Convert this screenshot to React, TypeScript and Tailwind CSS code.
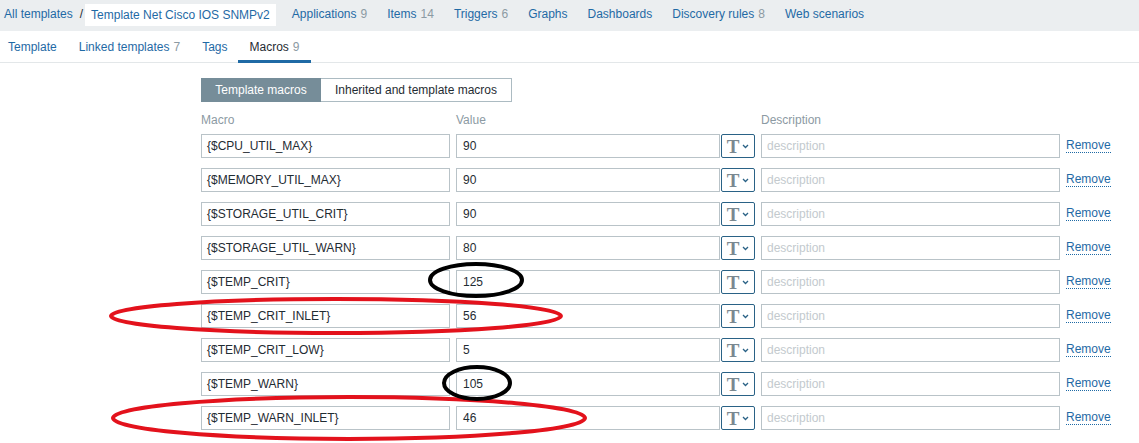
import React from "react";

const rows: [string, string][] = [
  ["{$CPU_UTIL_MAX}", "90"],
  ["{$MEMORY_UTIL_MAX}", "90"],
  ["{$STORAGE_UTIL_CRIT}", "90"],
  ["{$STORAGE_UTIL_WARN}", "80"],
  ["{$TEMP_CRIT}", "125"],
  ["{$TEMP_CRIT_INLET}", "56"],
  ["{$TEMP_CRIT_LOW}", "5"],
  ["{$TEMP_WARN}", "105"],
  ["{$TEMP_WARN_INLET}", "46"],
];

function Nav({ label, count }: { label: string; count?: string }) {
  return (
    <span className="px-[10px] whitespace-nowrap text-[#1f6aa5]">
      {label}
      {count && <span className="ml-[4px] text-[#8c9aa3]">{count}</span>}
    </span>
  );
}

function Tab({ label, count, active }: { label: string; count?: string; active?: boolean }) {
  return (
    <div
      className={
        "flex items-center px-[11px] pt-[2px] mb-[-1px] border-b-[3px] whitespace-nowrap " +
        (active ? "border-[#1f6aa5] text-[#1f2c33]" : "border-transparent text-[#1f6aa5]")
      }
    >
      {label}
      {count && <span className="ml-[4px] text-[#8c9aa3]">{count}</span>}
    </div>
  );
}

export default function App() {
  return (
    <div className="relative w-[1139px] h-[443px] overflow-hidden bg-white text-[12px] leading-[14px] text-[#1f2c33] font-['Liberation_Sans',Arial,sans-serif]">
      {/* top bar */}
      <div className="h-[31px] bg-[#ebeef0] flex items-center pb-[3px]">
        <span className="ml-[4px] text-[#1f6aa5]">All templates</span>
        <span className="ml-[7px] text-[#1f2c33]">/</span>
        <span className="ml-[2px] bg-white h-[22px] flex items-center px-[6px] text-[#1f6aa5] mt-[2px]">
          Template Net Cisco IOS SNMPv2
        </span>
        <div className="ml-[6px] flex items-center">
          <Nav label="Applications" count="9" />
          <Nav label="Items" count="14" />
          <Nav label="Triggers" count="6" />
          <Nav label="Graphs" />
          <Nav label="Dashboards" />
          <Nav label="Discovery rules" count="8" />
          <Nav label="Web scenarios" />
        </div>
      </div>
      {/* tabs */}
      <div className="h-[32px] flex items-stretch border-b border-[#e3e7e9] ml-[-3px]">
        <Tab label="Template" />
        <Tab label="Linked templates" count="7" />
        <Tab label="Tags" />
        <Tab label="Macros" count="9" active />
      </div>
      {/* content */}
      <div className="pl-[201px] pt-[15px]">
        <div className="flex h-[24px]">
          <div className="w-[120px] flex items-center justify-center bg-[#768d99] text-white">
            Template macros
          </div>
          <div className="w-[191px] flex items-center justify-center border border-l-0 border-[#acbbc2] bg-white text-[#1f2c33]">
            Inherited and template macros
          </div>
        </div>
        <div className="mt-[11px] flex text-[#8c9aa3] h-[14px]">
          <div className="w-[255px]">Macro</div>
          <div className="w-[305px]">Value</div>
          <div>Description</div>
        </div>
        <div className="mt-[7px] flex flex-col gap-[10px]">
          {rows.map(([m, v]) => (
            <div key={m} className="flex items-center h-[24px]">
              <div className="w-[249px] h-[24px] border border-[#b9c3c8] flex items-center pl-[5px]">
                {m}
              </div>
              <div className="ml-[6px] w-[264px] h-[24px] border border-[#b9c3c8] flex items-center pl-[6px]">
                {v}
              </div>
              <div className="ml-[1px] w-[34px] h-[24px] border border-[#2a6286] rounded-[2px] flex items-center justify-center gap-[3px]">
                <span className="font-['Liberation_Serif',serif] font-bold text-[19px] leading-none text-[#7a8890]">T</span>
                <svg width="7" height="5" viewBox="0 0 7 5" className="mt-[1px]">
                  <path d="M1 1 L3.5 3.5 L6 1" stroke="#2a6286" strokeWidth="1.3" fill="none" />
                </svg>
              </div>
              <div className="ml-[6px] w-[299px] h-[24px] border border-[#b9c3c8] flex items-center pl-[5px] text-[#c3cace]">
                description
              </div>
              <span className="ml-[6px] text-[#1f6aa5] border-b border-dotted border-[#1f6aa5] leading-[13px]">
                Remove
              </span>
            </div>
          ))}
        </div>
      </div>
      {/* annotations */}
      <svg className="absolute inset-0 pointer-events-none" width="1139" height="443">
        <ellipse cx="336" cy="316" rx="225" ry="17" fill="none" stroke="#e3121c" strokeWidth="4" />
        <ellipse cx="349" cy="418" rx="236" ry="21" fill="none" stroke="#e3121c" strokeWidth="4" />
        <ellipse cx="476" cy="280" rx="46" ry="16" fill="none" stroke="#000" strokeWidth="4" />
        <ellipse cx="477" cy="383" rx="33" ry="16" fill="none" stroke="#000" strokeWidth="4" />
      </svg>
    </div>
  );
}
